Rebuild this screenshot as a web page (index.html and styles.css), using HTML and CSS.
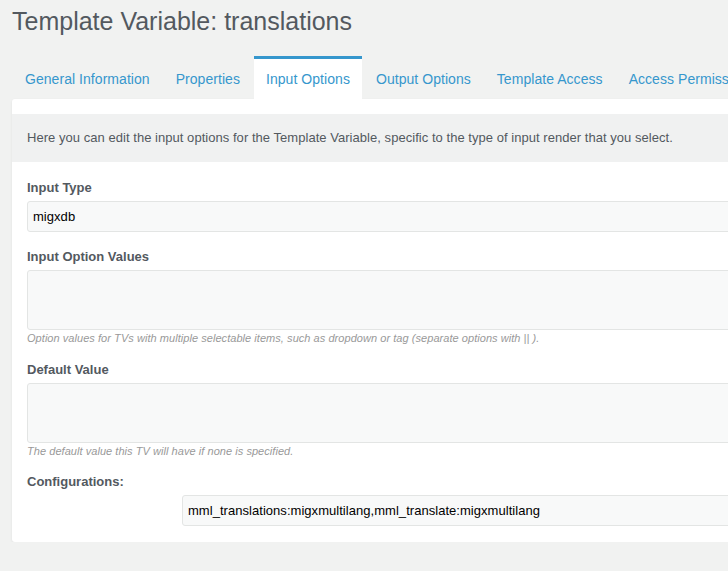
FILE: index.html
```html
<!DOCTYPE html>
<html>
<head>
<meta charset="utf-8">
<link rel="stylesheet" href="styles.css">
</head>
<body>
<div class="page">
  <h1 class="title">Template Variable: translations</h1>
  <ul class="tabs">
    <li class="tab">General Information</li>
    <li class="tab">Properties</li>
    <li class="tab active">Input Options</li>
    <li class="tab">Output Options</li>
    <li class="tab">Template Access</li>
    <li class="tab">Access Permissions</li>
  </ul>
  <div class="panel">
    <div class="intro">Here you can edit the input options for the Template Variable, specific to the type of input render that you select.</div>
    <div class="form">
      <div class="field">
        <label class="label">Input Type</label>
        <div class="input">migxdb</div>
      </div>
      <div class="field">
        <label class="label">Input Option Values</label>
        <div class="textarea"></div>
        <div class="help">Option values for TVs with multiple selectable items, such as dropdown or tag (separate options with || ).</div>
      </div>
      <div class="field">
        <label class="label">Default Value</label>
        <div class="textarea"></div>
        <div class="help tight">The default value this TV will have if none is specified.</div>
      </div>
      <div class="field">
        <label class="label">Configurations:</label>
        <div class="input config">mml_translations:migxmultilang,mml_translate:migxmultilang</div>
      </div>
    </div>
  </div>
</div>
</body>
</html>
```
FILE: styles.css
```css
html, body {
  margin: 0;
  padding: 0;
  background: #f1f2f1;
  overflow: hidden;
}
body {
  font-family: "Liberation Sans", Arial, sans-serif;
  color: #53595f;
}
.page {
  width: 1000px;
  padding: 0 0 0 12px;
}
.title {
  margin: 0;
  padding-top: 7px;
  font-size: 25px;
  line-height: 28px;
  font-weight: normal;
  color: #53595f;
}
.tabs {
  list-style: none;
  margin: 21px 0 0 1px;
  padding: 0;
  display: flex;
}
.tab {
  margin-right: 2px;
  padding: 12px 12px;
  border-top: 3px solid transparent;
  font-size: 14px;
  line-height: 16px;
  letter-spacing: 0.05px;
  color: #3697cd;
  white-space: nowrap;
}
.tab.active {
  background: #fff;
  border-top-color: #3697cd;
}
.panel {
  background: #fff;
  border-radius: 3px 0 0 3px;
  box-shadow: 0 1px 3px rgba(0, 0, 0, 0.07);
  padding-top: 15px;
}
.intro {
  background: #f0f1f1;
  padding: 0 15px;
  height: 48px;
  line-height: 48px;
  font-size: 13px;
  letter-spacing: 0.04px;
  color: #53595f;
}
.form {
  padding: 15px 15px 16px;
}
.label {
  display: block;
  font-size: 13px;
  font-weight: bold;
  line-height: 16px;
  padding-top: 3px;
  margin-bottom: 5px;
  color: #53595f;
}
.input {
  box-sizing: border-box;
  height: 31px;
  border: 1px solid #e3e5e4;
  border-radius: 3px;
  background: #f8f9f9;
  padding: 0 5px;
  line-height: 29px;
  font-size: 13px;
  letter-spacing: 0.04px;
  color: #000;
  margin-bottom: 14px;
}
.input.config {
  margin-left: 155px;
  margin-bottom: 0;
  margin-top: 4px;
}
.textarea {
  box-sizing: border-box;
  height: 60px;
  border: 1px solid #e3e5e4;
  border-radius: 3px;
  background: #f8f9f9;
}
.help {
  font-size: 11px;
  font-style: italic;
  letter-spacing: 0.05px;
  color: #999;
  line-height: 14px;
  padding-top: 1px;
  margin-bottom: 14px;
}
.help.tight {
  margin-bottom: 13px;
}
```
